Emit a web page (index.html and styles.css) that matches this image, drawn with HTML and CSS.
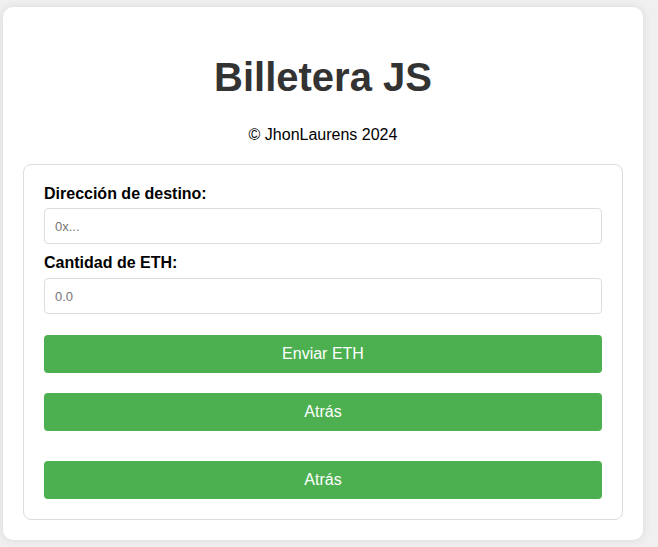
FILE: index.html
```html
<!DOCTYPE html>
<html lang="es">
<head>
<meta charset="utf-8">
<title>Billetera JS</title>
<link rel="stylesheet" href="styles.css">
</head>
<body>
<div class="container">
  <h1 class="title">Billetera JS</h1>
  <p class="copy">© JhonLaurens 2024</p>
  <div class="card">
    <label class="label" for="dest">Dirección de destino:</label>
    <input class="input" id="dest" type="text" placeholder="0x...">
    <label class="label label-next" for="amount">Cantidad de ETH:</label>
    <input class="input" id="amount" type="text" placeholder="0.0">
    <button class="btn btn-first" type="button">Enviar ETH</button>
    <button class="btn" type="button">Atrás</button>
    <button class="btn btn-last" type="button">Atrás</button>
  </div>
</div>
</body>
</html>
```
FILE: styles.css
```css
html, body {
  margin: 0;
  padding: 0;
  background: #f0f0f0;
  font-family: "Liberation Sans", Arial, sans-serif;
}
body {
  padding: 7px 0 7px 3px;
}
.container {
  width: 600px;
  padding: 20px;
  background: #fff;
  border-radius: 10px;
  box-shadow: 0 0 10px rgba(0, 0, 0, 0.1);
}
.title {
  margin: 27px 0 26px;
  text-align: center;
  font-size: 40px;
  line-height: 46px;
  font-weight: bold;
  color: #333;
}
.copy {
  margin: 0 0 20px;
  text-align: center;
  font-size: 16px;
  line-height: 18px;
  color: #000;
}
.card {
  display: flex;
  flex-direction: column;
  border: 1px solid #ddd;
  border-radius: 8px;
  padding: 20px;
}
.label {
  display: block;
  font-size: 16px;
  line-height: 18px;
  font-weight: bold;
  color: #000;
  margin-bottom: 5px;
}
.label-next {
  margin-top: 10px;
  margin-bottom: 6px;
}
.input {
  box-sizing: border-box;
  width: 100%;
  height: 36px;
  margin: 0;
  padding: 0 10px;
  border: 1px solid #ddd;
  border-radius: 4px;
  font-family: "Liberation Sans", Arial, sans-serif;
  font-size: 13px;
  color: #333;
  background: #fff;
}
.input::placeholder {
  color: #757575;
}
.btn {
  box-sizing: border-box;
  width: 100%;
  height: 38px;
  margin-top: 20px;
  border: none;
  border-radius: 4px;
  background: #4caf50;
  color: #fff;
  font-family: "Liberation Sans", Arial, sans-serif;
  font-size: 16px;
  cursor: pointer;
}
.btn-first {
  margin-top: 21px;
}
.btn-last {
  margin-top: 30px;
}
```
